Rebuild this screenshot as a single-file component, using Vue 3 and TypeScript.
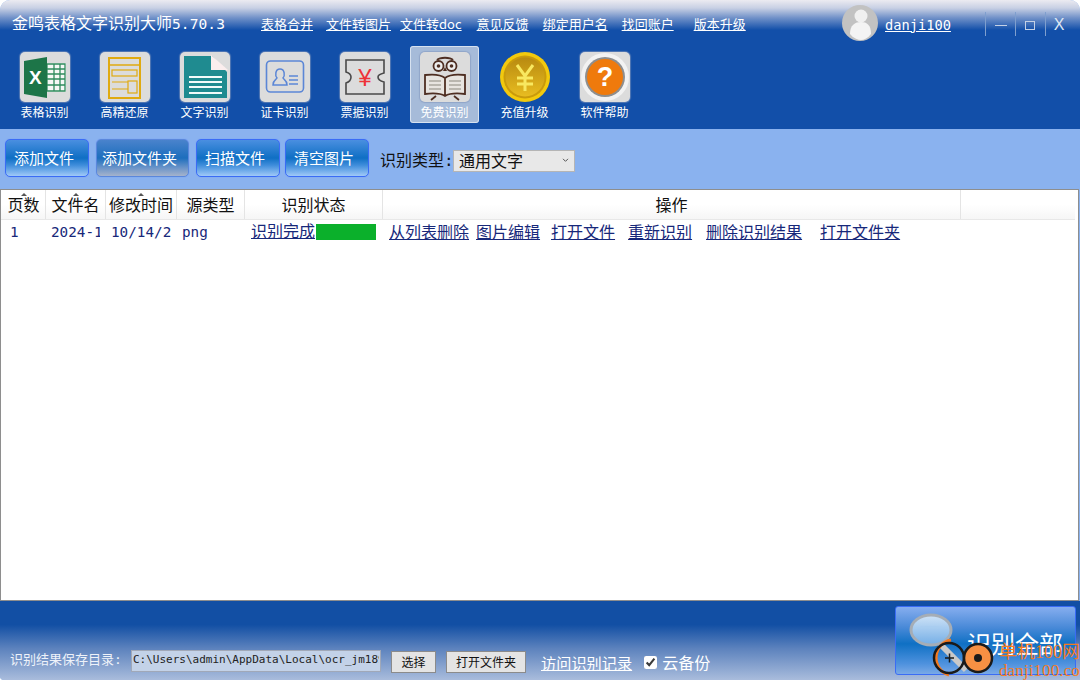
<script setup lang="ts">
import { ref } from 'vue';

const navLinks = ['表格合并', '文件转图片', '文件转doc', '意见反馈', '绑定用户名', '找回账户', '版本升级'];
const tools = [
    { id: 'excel', label: '表格识别' },
    { id: 'restore', label: '高精还原' },
    { id: 'text', label: '文字识别' },
    { id: 'card', label: '证卡识别' },
    { id: 'ticket', label: '票据识别' },
    { id: 'free', label: '免费识别' },
    { id: 'coin', label: '充值升级' },
    { id: 'help', label: '软件帮助' },
];
const activeTool = ref('free');
const actions = ['从列表删除', '图片编辑', '打开文件', '重新识别', '删除识别结果', '打开文件夹'];
const columns = [
    { title: '页数', sort: true },
    { title: '文件名', sort: true },
    { title: '修改时间', sort: true },
    { title: '源类型', sort: false },
    { title: '识别状态', sort: false },
    { title: '操作', sort: false },
    { title: '', sort: false },
];
const recogType = ref('通用文字');
const cloudBackup = ref(true);
const savePath = ref('C:\\Users\\admin\\AppData\\Local\\ocr_jm189');
</script>

<template>
    <div class="window">
        <header class="top">
            <div class="title-row">
                <span class="app-title">金鸣表格文字识别大师<span class="mono">5.70.3</span></span>
                <nav class="nav">
                    <a v-for="link in navLinks" :key="link" class="nav-link">{{ link }}</a>
                </nav>
                <div class="user">
                    <svg class="avatar" viewBox="0 0 36 36" width="36" height="36">
                        <circle cx="18" cy="18" r="18" fill="#c2c2c2" />
                        <circle cx="19" cy="11" r="6.5" fill="#f0f0f0" />
                        <path d="M8 29c0-9 5-12 11-12s10 3 10 12c-3 4-7 6-10 6s-8-2-11-6z" fill="#f4f4f4" />
                    </svg>
                    <a class="user-name">danji100</a>
                </div>
                <div class="win-controls">
                    <span class="win-btn"><i class="win-min"></i></span>
                    <span class="win-btn"><i class="win-max"></i></span>
                    <span class="win-btn win-close">X</span>
                </div>
            </div>
            <div class="tools">
                <div v-for="tool in tools" :key="tool.id" class="tool" :class="{ active: tool.id === activeTool }">
                    <div class="tool-icon" :class="{ bare: tool.id === 'coin' }">
                        <svg v-if="tool.id === 'excel'" viewBox="0 0 50 50" width="50" height="50">
                            <rect x="26" y="11" width="20" height="29" fill="#f6f8f6" />
                            <path d="M27 12h18v27H27zM27 17h18M27 22h18M27 27h18M27 33h18M34 12v27M40 12v27" fill="none" stroke="#2f8a5c" stroke-width="1.3" />
                            <polygon points="4,9 27,5 27,46 4,42" fill="#1d7548" />
                            <text x="9" y="32" class="svg-x">X</text>
                        </svg>
                        <svg v-else-if="tool.id === 'restore'" viewBox="0 0 50 50" width="50" height="50">
                            <g fill="none" stroke="#e0aa10">
                                <rect x="9" y="6" width="31" height="40" stroke-width="2" />
                                <path d="M9 13h31" stroke-width="1.5" />
                                <rect x="12" y="18" width="25" height="6" stroke-width="1.2" />
                                <rect x="28" y="29" width="9" height="12" stroke-width="1.2" />
                                <path d="M12 30h16M12 37h16" stroke-width="1.2" />
                            </g>
                        </svg>
                        <svg v-else-if="tool.id === 'text'" viewBox="0 0 50 50" width="50" height="50">
                            <path d="M4 4h28l15 16v26H4z" fill="#1f8b90" />
                            <path d="M31 3v15h17z" fill="#fbeeee" />
                            <path d="M9 25h33M9 30h33M9 35h33M9 41h33" stroke="#f2fbfa" stroke-width="2" />
                        </svg>
                        <svg v-else-if="tool.id === 'card'" viewBox="0 0 50 50" width="50" height="50">
                            <rect x="6.5" y="9" width="37" height="31" rx="4" fill="none" stroke="#5b86d6" stroke-width="1.6" />
                            <path d="M13 33c0-5 3-5 4-7-2-2-2-9 3-9s5 7 3 9c1 2 4 2 4 7z" fill="none" stroke="#5b86d6" stroke-width="1.5" />
                            <path d="M29 24h9M29 28h9M29 32h9" stroke="#5b86d6" stroke-width="1.4" />
                        </svg>
                        <svg v-else-if="tool.id === 'ticket'" viewBox="0 0 50 50" width="50" height="50">
                            <path d="M6 8h38v13c-4 1-6 2-6 4s2 4 6 5v12H6V31c3-1 5-3 5-6s-2-4-5-5z" fill="none" stroke="#4a4a4a" stroke-width="1.6" />
                            <text x="25" y="34" class="svg-yen">¥</text>
                        </svg>
                        <svg v-else-if="tool.id === 'free'" viewBox="0 0 50 50" width="50" height="50">
                            <path d="M17 8c3-3 13-3 16 0" fill="none" stroke="#4e2e22" stroke-width="1.8" />
                            <circle cx="18.500" cy="14" r="5" fill="#eee" stroke="#4e2e22" stroke-width="1.8" />
                            <circle cx="31.500" cy="14" r="5" fill="#eee" stroke="#4e2e22" stroke-width="1.8" />
                            <circle cx="18.500" cy="14" r="1.8" fill="#4e2e22" />
                            <circle cx="31.500" cy="14" r="1.8" fill="#4e2e22" />
                            <path d="M25 15l-2 4h4z" fill="#4e2e22" />
                            <path d="M25 26c-5-4-12-4-20-3v19c8-1 15-1 20 2 5-3 12-3 20-2V23c-8-1-15-1-20 3zM25 26v18" fill="#e7e4e0" stroke="#4e2e22" stroke-width="1.8" />
                            <path d="M9 29h12M9 33h12M9 37h12M29 29h12M29 33h12M29 37h12" stroke="#aaa69f" stroke-width="1.3" />
                            <path d="M16 44l-5 4M34 44l5 4" stroke="#4e2e22" stroke-width="1.8" />
                        </svg>
                        <svg v-else-if="tool.id === 'coin'" viewBox="0 0 50 50" width="50" height="50">
                            <defs>
                                <linearGradient id="coinFace" x1="0" y1="0" x2="0" y2="1">
                                    <stop offset="0" stop-color="#b88a10" />
                                    <stop offset="1" stop-color="#e8bc20" />
                                </linearGradient>
                            </defs>
                            <circle cx="25" cy="25" r="25" fill="#f2c90e" />
                            <circle cx="25" cy="25" r="21.500" fill="#c99a0c" />
                            <circle cx="25" cy="25" r="19.500" fill="url(#coinFace)" />
                            <path d="M17 13l8 11 8-11M25 24v15M17 26h16M17 32h16" fill="none" stroke="#f8e860" stroke-width="3" />
                        </svg>
                        <svg v-else viewBox="0 0 50 50" width="50" height="50">
                            <circle cx="25" cy="25" r="24" fill="#f2f2f2" />
                            <circle cx="25" cy="25" r="20" fill="#8e8e8e" />
                            <circle cx="25" cy="25" r="18" fill="#ef7a0c" />
                            <text x="25" y="34" class="svg-q">?</text>
                        </svg>
                    </div>
                    <span class="tool-label">{{ tool.label }}</span>
                </div>
            </div>
        </header>

        <section class="toolbar">
            <button class="blue-btn w-84">添加文件</button>
            <button class="blue-btn hover w-93">添加文件夹</button>
            <button class="blue-btn w-84 ml-7">扫描文件</button>
            <button class="blue-btn w-84 ml-5">清空图片</button>
            <label class="type-label">识别类型:</label>
            <div class="type-select">
                <span>{{ recogType }}</span>
                <svg viewBox="0 0 8 6" width="7" height="5"><path d="M1 1l3 3 3-3" fill="none" stroke="#555" stroke-width="1.2" /></svg>
            </div>
        </section>

        <main class="list">
            <div class="list-head">
                <div v-for="col in columns" :key="col.title" class="head-cell" :class="{ sort: col.sort }">{{ col.title }}</div>
            </div>
            <div class="list-row">
                <div class="cell mono">1</div>
                <div class="cell mono">2024-10-14</div>
                <div class="cell mono">10/14/2024</div>
                <div class="cell mono">png</div>
                <div class="cell status">
                    <a class="row-link">识别完成</a>
                    <span class="progress"></span>
                </div>
                <div class="cell row-actions">
                    <a v-for="action in actions" :key="action" class="row-link">{{ action }}</a>
                </div>
            </div>
        </main>

        <footer class="bottom">
            <span class="save-label">识别结果保存目录:</span>
            <input v-model="savePath" class="save-path" type="text" readonly>
            <button class="grey-btn w-45">选择</button>
            <button class="grey-btn w-80">打开文件夹</button>
            <a class="history-link">访问识别记录</a>
            <label class="cloud">
                <input v-model="cloudBackup" type="checkbox">
                <span>云备份</span>
            </label>
            <button class="run-btn">
                <svg class="run-icon" viewBox="0 0 72 66" width="72" height="66">
                    <defs>
                        <linearGradient id="lens" x1="0" y1="0" x2="0" y2="1">
                            <stop offset="0" stop-color="#cfe3f7" />
                            <stop offset="1" stop-color="#74aee6" />
                        </linearGradient>
                    </defs>
                    <path d="M32 34l26 26" stroke="#c9c9c9" stroke-width="6" />
                    <ellipse cx="23" cy="20" rx="20" ry="15" fill="url(#lens)" stroke="#a5adb6" stroke-width="3" />
                    <path d="M5 19c10-3 26-3 36 0" fill="none" stroke="#a8cdf0" stroke-width="1" />
                </svg>
                <span>识别全部</span>
            </button>
            <div class="watermark">
                <svg viewBox="0 0 66 44" width="66" height="44">
                    <path d="M20 4a18 18 0 0 0-2 35" fill="none" stroke="#f57a1f" stroke-width="3" />
                    <circle cx="18" cy="22" r="15" fill="none" stroke="#1a1a1a" stroke-width="2.500" />
                    <path d="M14 22h9M18.500 17.500v9" stroke="#1a1a1a" stroke-width="1.500" />
                    <circle cx="47" cy="22" r="14" fill="#f79043" stroke="#1a1a1a" stroke-width="2.500" />
                    <circle cx="47" cy="22" r="4" fill="#1a1a1a" />
                </svg>
                <div class="wm-text">
                    <span class="wm-cn">单机100网</span>
                    <span class="wm-en">danji100.com</span>
                </div>
            </div>
        </footer>
    </div>
</template>

<style scoped>
.window {
    width: 1080px;
    height: 680px;
    display: flex;
    flex-direction: column;
    overflow: hidden;
    background: #8ab2ef;
    border-radius: 10px 10px 0 4px;
    font-family: "Noto Sans CJK SC", "Liberation Sans", sans-serif;
}

.mono {
    font-family: "DejaVu Sans Mono", "Noto Sans CJK SC", monospace;
}

/* top blue area */
.top {
    height: 129px;
    flex: none;
    background: linear-gradient(#ecebf1 0, #c8d0e4 8px, #6f90c8 18px, #124fa9 30px, #124fa9 100%);
    color: #fff;
}

.title-row {
    height: 46px;
    display: flex;
    align-items: center;
    padding-left: 12px;
}

.app-title {
    width: 249px;
    font-size: 16px;
    line-height: 50px;
    white-space: nowrap;
}

.app-title .mono {
    font-size: 14.5px;
    letter-spacing: 0.1px;
}

.nav {
    width: 581px;
    display: flex;
    gap: 13px;
    padding-top: 1px;
}

.nav-link {
    font-size: 13px;
    line-height: 18px;
    text-decoration: underline;
    white-space: nowrap;
}

.nav-link:nth-child(3) {
    margin-left: -4px;
}

.nav-link:nth-child(4) {
    margin-left: 2px;
}

.nav-link:nth-child(5),
.nav-link:nth-child(6) {
    margin-left: 1px;
}

.nav-link:nth-child(7) {
    margin-left: 7px;
}

.user {
    width: 143px;
    display: flex;
    align-items: center;
    gap: 7px;
}

.avatar {
    flex: none;
}

.user-name {
    font-family: "DejaVu Sans Mono", monospace;
    font-size: 13.7px;
    text-decoration: underline;
    padding-top: 3px;
}

.win-controls {
    display: flex;
    padding-top: 2px;
}

.win-btn {
    width: 30px;
    height: 24px;
    box-sizing: border-box;
    border-left: 1px solid #7f9fce;
    display: flex;
    align-items: center;
    justify-content: center;
    color: #dfe7f3;
    font-family: "Liberation Sans", sans-serif;
    font-size: 16px;
}

.win-close {
    padding: 2px 3px 0 0;
}

.win-min {
    width: 12px;
    height: 1px;
    background: #c4d1e6;
    margin-top: 3px;
}

.win-max {
    width: 8px;
    height: 7px;
    border: 1px solid #c4d1e6;
    margin: 3px 2px 0 0;
}

.tools {
    display: flex;
    gap: 11px;
    padding-left: 10px;
}

.tool {
    width: 69px;
    height: 77px;
    box-sizing: border-box;
    padding-top: 6px;
    display: flex;
    flex-direction: column;
    align-items: center;
    border-radius: 3px;
}

.tool.active {
    background: #a6bbd9;
    outline: 1px solid #d7e2f0;
    outline-offset: -1px;
}

.tool-icon {
    width: 50px;
    height: 50px;
    background: #dcdcdc;
    border-radius: 5px;
    box-shadow: 0 0 1px 1px rgba(130, 150, 190, 0.6);
}

.tool-icon.bare {
    background: transparent;
    box-shadow: none;
}

.tool-icon svg {
    display: block;
}

.svg-x {
    font-family: "Liberation Sans", sans-serif;
    font-size: 19px;
    font-weight: 700;
    fill: #fff;
}

.svg-yen {
    font-family: "Liberation Sans", sans-serif;
    font-size: 24px;
    fill: #ee3338;
    text-anchor: middle;
}

.svg-q {
    font-family: "Liberation Sans", sans-serif;
    font-size: 27px;
    font-weight: 700;
    fill: #fff;
    text-anchor: middle;
}

.tool-label {
    margin-top: 1px;
    font-size: 12px;
    line-height: 18px;
    white-space: nowrap;
}

/* toolbar */
.toolbar {
    height: 60px;
    flex: none;
    box-sizing: border-box;
    padding: 10px 0 0 5px;
    display: flex;
    align-items: flex-start;
    background: #8ab2ef;
}

.blue-btn {
    height: 38px;
    padding: 0 6px 2px 0;
    border: 1.5px solid #3a6cf5;
    border-radius: 5px;
    background: linear-gradient(#4a8fe0 0, #0f6fc4 50%, #3f8ddb 70%, #a0c9f8 100%);
    box-shadow: 0 0 1px #5f8bff;
    color: #fff;
    font-family: inherit;
    font-size: 15px;
    white-space: nowrap;
}

.blue-btn.hover {
    margin-left: 7px;
    border-color: #5a87dc;
    background: linear-gradient(#4a83cc 0, #1d6ebd 50%, #6d95c9 78%, #a5b3cc 100%);
}

.w-84 {
    width: 84px;
}

.w-93 {
    width: 93px;
}

.ml-7 {
    margin-left: 7px;
}

.ml-5 {
    margin-left: 5px;
}

.type-label {
    margin-left: 11px;
    font-family: "DejaVu Sans Mono", "Noto Sans CJK SC", monospace;
    font-size: 16px;
    line-height: 44px;
    color: #111;
    width: 73px;
    white-space: nowrap;
}

.type-select {
    width: 122px;
    height: 22px;
    margin-top: 11px;
    box-sizing: border-box;
    padding: 0 5px 2px 5px;
    display: flex;
    align-items: center;
    justify-content: space-between;
    background: #e8e8e8;
    border: 1px solid #b5b5b5;
    font-size: 16px;
    line-height: 20px;
    color: #111;
}

/* file list */
.list {
    flex: 1;
    min-height: 0;
    box-sizing: border-box;
    margin: 0 1px 0 0;
    padding-right: 3px;
    background: #fff;
    border: 1px solid #8e8e8e;
}

.list-head,
.list-row {
    display: grid;
    grid-template-columns: 44px 60px 71px 68px 138px 578px 1fr;
}

.list-head {
    height: 29px;
    padding-left: 1px;
    background: linear-gradient(#fff 50%, #f6f6f6);
    border-bottom: 1px solid #e8e8e8;
}

.head-cell {
    position: relative;
    border-right: 1px solid #e4e4e4;
    font-size: 16px;
    line-height: 29px;
    text-align: center;
    color: #111;
    white-space: nowrap;
    overflow: hidden;
}

.head-cell:last-child {
    border-right: none;
}

.head-cell.sort::before {
    content: "";
    position: absolute;
    left: 50%;
    top: 3px;
    margin-left: -3px;
    border: 3px solid transparent;
    border-top: none;
    border-bottom: 3px solid #555;
}

.list-row {
    height: 22px;
    padding-left: 1px;
    align-items: center;
}

.cell {
    box-sizing: border-box;
    padding-left: 8px;
    font-size: 14.300px;
    color: #17287a;
    white-space: nowrap;
    overflow: hidden;
}

.cell:nth-child(2),
.cell:nth-child(3) {
    padding-left: 5px;
    padding-right: 5px;
    clip-path: inset(0 6px 0 0);
}

.cell:nth-child(4) {
    padding-left: 5px;
}

.status {
    padding-left: 6px;
    display: flex;
    align-items: center;
    overflow: visible;
}

.status .row-link {
    margin-bottom: 3px;
}

.row-link {
    font-family: "Noto Sans CJK SC", sans-serif;
    font-size: 16px;
    line-height: 20px;
    color: #17287a;
    text-decoration: underline;
    white-space: nowrap;
}

.progress {
    width: 60px;
    height: 16px;
    margin-left: 1px;
    background: #0bb02b;
}

.row-actions {
    padding: 0 0 2px 6px;
    display: flex;
    gap: 11px;
}

.row-actions .row-link:nth-child(2) {
    margin-left: -4px;
}

.row-actions .row-link:nth-child(4) {
    margin-left: 2px;
}

.row-actions .row-link:nth-child(5) {
    margin-left: 3px;
}

.row-actions .row-link:nth-child(6) {
    margin-left: 7px;
}

/* bottom bar */
.bottom {
    position: relative;
    height: 79px;
    flex: none;
    box-sizing: border-box;
    padding: 49px 0 0 10px;
    display: flex;
    align-items: flex-start;
    background: linear-gradient(#124fa4 0, #124fa4 30%, #5c82bd 60%, #a9bcdc 100%);
    color: #fff;
}

.save-label {
    width: 121px;
    font-family: "DejaVu Sans Mono", "Noto Sans CJK SC", monospace;
    font-size: 13px;
    line-height: 20px;
    color: #eef2f9;
    white-space: nowrap;
}

.save-path {
    width: 250px;
    height: 22px;
    box-sizing: border-box;
    padding: 0 1px 4px;
    background: #c3d2e8;
    border: 1px solid #a0a8b8;
    color: #222;
    font-family: "DejaVu Sans Mono", monospace;
    font-size: 11px;
    outline: none;
}

.grey-btn {
    height: 22px;
    margin-top: 1px;
    padding: 0 0 2px;
    background: #e4e4e4;
    border: 1px solid #8b8b8b;
    color: #111;
    font-family: inherit;
    font-size: 12px;
}

.w-45 {
    width: 45px;
    margin-left: 10px;
}

.w-80 {
    width: 80px;
    margin-left: 10px;
}

.history-link {
    margin-left: 15px;
    font-size: 15.200px;
    line-height: 24px;
    text-decoration: underline;
    white-space: nowrap;
}

.cloud {
    margin-left: 12px;
    display: flex;
    align-items: center;
    height: 24px;
    font-size: 16px;
    white-space: nowrap;
}

.cloud input {
    width: 13px;
    height: 13px;
    margin: 0 5px 0 0;
    accent-color: #fff;
}

.run-btn {
    position: absolute;
    left: 895px;
    top: 5px;
    width: 181px;
    height: 69px;
    padding: 0;
    box-sizing: border-box;
    border: 1px solid #3a6cf5;
    border-radius: 3px;
    background: linear-gradient(#86aeef 0, #4a8ad8 30%, #0f70c4 55%, #4f92de 85%, #7aa9e6 100%);
    color: #fff;
    font-family: inherit;
    font-size: 24px;
    text-align: left;
}

.run-btn span {
    position: absolute;
    left: 71px;
    top: 18px;
    white-space: nowrap;
}

.run-icon {
    position: absolute;
    left: 12px;
    top: 3px;
}

.watermark {
    position: absolute;
    left: 931px;
    top: 35px;
    display: flex;
    color: #f57a1f;
    pointer-events: none;
}

.wm-text {
    margin-left: 2px;
    padding-top: 7px;
    display: flex;
    flex-direction: column;
    font-family: "Liberation Serif", "Noto Sans CJK SC", serif;
    white-space: nowrap;
}

.wm-cn {
    font-size: 18px;
    line-height: 18px;
}

.wm-en {
    font-size: 17px;
    line-height: 19px;
    letter-spacing: 0.1px;
}
</style>

<style>
html, body {
    margin: 0;
    background: #fff;
}
</style>
